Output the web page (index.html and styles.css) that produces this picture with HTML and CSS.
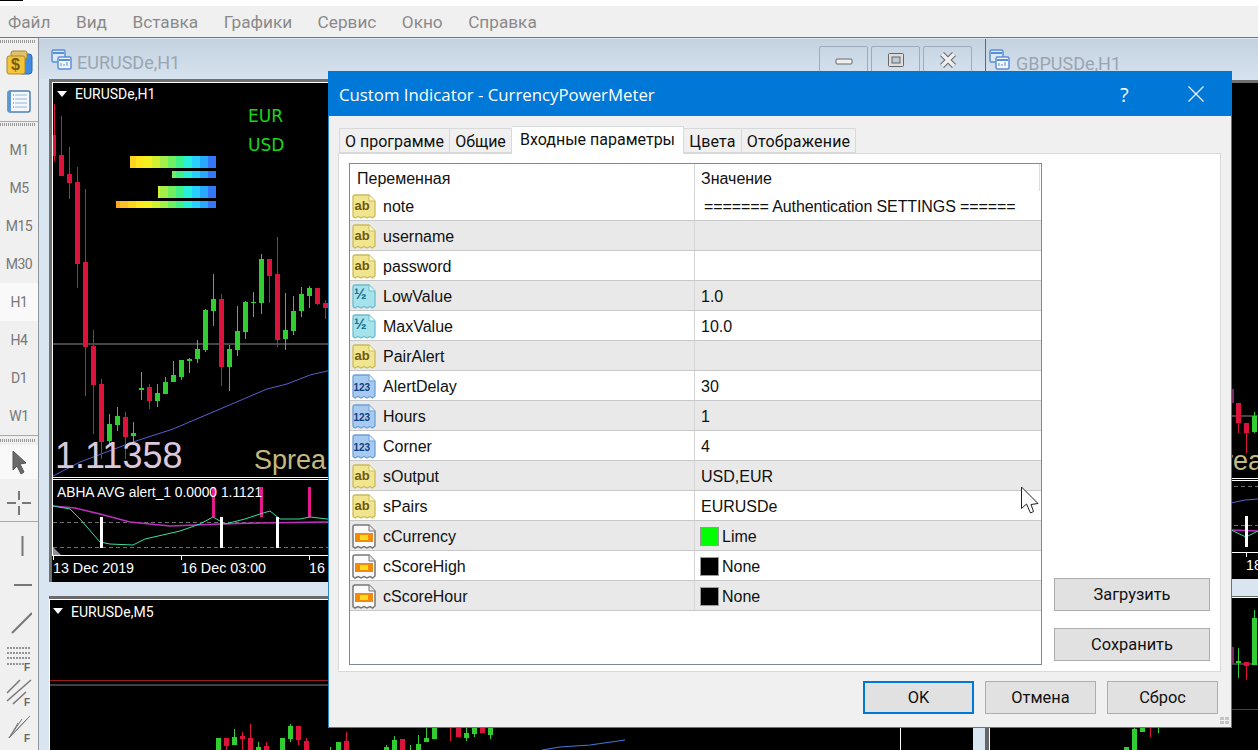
FILE: index.html
```html
<!DOCTYPE html>
<html lang="ru">
<head>
<meta charset="utf-8">
<title>Custom Indicator - CurrencyPowerMeter</title>
<link rel="stylesheet" href="styles.css">
</head>
<body>
<svg class="defs" width="0" height="0" aria-hidden="true">
  <defs>
    <linearGradient id="meter" gradientUnits="userSpaceOnUse" x1="112" x2="216" y1="0" y2="0">
      <stop offset="0" stop-color="#ffa628"/><stop offset=".077" stop-color="#ffa628"/>
      <stop offset=".077" stop-color="#ffc028"/><stop offset=".154" stop-color="#ffc028"/>
      <stop offset=".154" stop-color="#ffd41e"/><stop offset=".231" stop-color="#ffd41e"/>
      <stop offset=".231" stop-color="#ffe61e"/><stop offset=".308" stop-color="#ffe61e"/>
      <stop offset=".308" stop-color="#f4f020"/><stop offset=".385" stop-color="#f4f020"/>
      <stop offset=".385" stop-color="#d0f030"/><stop offset=".462" stop-color="#d0f030"/>
      <stop offset=".462" stop-color="#a4ee48"/><stop offset=".538" stop-color="#a4ee48"/>
      <stop offset=".538" stop-color="#70f060"/><stop offset=".615" stop-color="#70f060"/>
      <stop offset=".615" stop-color="#40f088"/><stop offset=".692" stop-color="#40f088"/>
      <stop offset=".692" stop-color="#28f0d8"/><stop offset=".769" stop-color="#28f0d8"/>
      <stop offset=".769" stop-color="#28d0ff"/><stop offset=".846" stop-color="#28d0ff"/>
      <stop offset=".846" stop-color="#28a8ff"/><stop offset=".923" stop-color="#28a8ff"/>
      <stop offset=".923" stop-color="#3478f8"/><stop offset="1" stop-color="#3478f8"/>
    </linearGradient>
    <symbol id="doc-ab" viewBox="0 0 24 26">
      <path d="M3 1H17L23 7V22l-2.500 2-2.500-1.500-3 1.500-3-1.500-3 1.500-3-1.500-3 1.500-2-1.500V3q0-2 2-2Z" fill="#f1e68f" stroke="#c9bb5c" stroke-width="1.300"/>
      <path d="M17 1V7H23" fill="#fff8c8" stroke="#c9bb5c"/>
      <text x="2.500" y="16" class="ic-t ic-ab">ab</text>
    </symbol>
    <symbol id="doc-half" viewBox="0 0 24 26">
      <path d="M3 1H17L23 7V22l-2.500 2-2.500-1.500-3 1.500-3-1.500-3 1.500-3-1.500-3 1.500-2-1.500V3q0-2 2-2Z" fill="#a6e2ec" stroke="#6cbccb" stroke-width="1.300"/>
      <path d="M17 1V7H23" fill="#dff6fa" stroke="#6cbccb"/>
      <text x="2" y="15" class="ic-t ic-half">½</text>
    </symbol>
    <symbol id="doc-int" viewBox="0 0 24 26">
      <path d="M3 1H17L23 7V22l-2.500 2-2.500-1.500-3 1.500-3-1.500-3 1.500-3-1.500-3 1.500-2-1.500V3q0-2 2-2Z" fill="#a7cbf0" stroke="#6f9fd2" stroke-width="1.300"/>
      <path d="M17 1V7H23" fill="#e0eefb" stroke="#6f9fd2"/>
      <text x="1.500" y="17" class="ic-t ic-int">123</text>
    </symbol>
    <symbol id="doc-color" viewBox="0 0 24 26">
      <path d="M3 1H17L23 7V22l-2.500 2-2.500-1.500-3 1.500-3-1.500-3 1.500-3-1.500-3 1.500-2-1.500V3q0-2 2-2Z" fill="#fafafa" stroke="#777" stroke-width="1.500"/>
      <path d="M17 1V7H23" fill="#e8e8e8" stroke="#777"/>
      <rect x="3" y="9" width="18" height="9" fill="#f08a08"/>
      <rect x="8" y="11" width="8" height="5" fill="#ffd820"/>
    </symbol>
    <symbol id="win-icon" viewBox="0 0 21 21">
      <rect x="1" y="1" width="13" height="12" rx="1.500" fill="#dbe8f6" stroke="#5b8fd6" stroke-width="1.500"/>
      <path d="M2 4H13" stroke="#5b8fd6" stroke-width="2"/>
      <rect x="7" y="8" width="13" height="12" rx="1.500" fill="#f2f7fc" stroke="#5b8fd6" stroke-width="1.500"/>
      <path d="M8 11H19" stroke="#5b8fd6" stroke-width="2"/>
      <path d="M10 17V14M13 17V15M16 17V13" stroke="#5b8fd6"/>
    </symbol>
  </defs>
</svg>

<div class="app">
  <div class="topstrip"><span class="topmark"></span></div>
  <nav class="menubar">
    <span>Файл</span><span>Вид</span><span>Вставка</span><span>Графики</span><span>Сервис</span><span>Окно</span><span>Справка</span>
  </nav>
  <div class="workspace">
    <aside class="toolbar">
      <div class="grip first"></div>
      <div class="tool big">
        <svg width="28" height="28" viewBox="0 0 28 28">
          <rect x="14" y="5" width="13" height="20" rx="3" fill="#3f8be0" stroke="#2c68b0"/>
          <rect x="6" y="2" width="16" height="8" rx="2" fill="#e3c070" stroke="#a98a2f"/>
          <rect x="2" y="7" width="18" height="18" rx="2" fill="#f2c53a" stroke="#a98a2f"/>
          <text x="6" y="21" class="dollar">$</text>
        </svg>
      </div>
      <div class="tool big">
        <svg width="26" height="26" viewBox="0 0 26 26">
          <rect x="2" y="2" width="22" height="21" rx="2" fill="#f4f8fc" stroke="#4a7fb5" stroke-width="1.500"/>
          <rect x="2" y="2" width="3" height="21" fill="#5d97d0"/>
          <path d="M9 6H21M9 10H21M9 14H21M9 18H21" stroke="#9ab4cc"/>
          <path d="M7 6H8M7 10H8M7 14H8M7 18H8" stroke="#c8304a"/>
        </svg>
      </div>
      <div class="toolsep"><div class="grip"></div></div>
      <div class="tf">M1</div>
      <div class="tf">M5</div>
      <div class="tf">M15</div>
      <div class="tf">M30</div>
      <div class="tf active">H1</div>
      <div class="tf">H4</div>
      <div class="tf">D1</div>
      <div class="tf">W1</div>
      <div class="toolsep wide"><div class="grip"></div></div>
      <div class="tool active small">
        <svg width="20" height="26" viewBox="0 0 20 26"><path d="M4 2V21L8 17L12 25L15 23L11 15L17 14Z" fill="#6a6a6a" stroke="#555"/></svg>
      </div>
      <div class="tool cross">
        <svg width="26" height="26" viewBox="0 0 26 26"><path d="M13 1V10M13 16V25M1 13H10M16 13H25" stroke="#777" stroke-width="2"/></svg>
      </div>
      <div class="tool line">
        <svg width="26" height="26" viewBox="0 0 26 26"><path d="M16.500 3V23" stroke="#777" stroke-width="2"/></svg>
      </div>
      <div class="tool">
        <svg width="26" height="26" viewBox="0 0 26 26"><path d="M8 14H26" stroke="#777" stroke-width="2"/></svg>
      </div>
      <div class="tool">
        <svg width="26" height="26" viewBox="0 0 26 26"><path d="M6 24L26 4" stroke="#777" stroke-width="2"/></svg>
      </div>
      <div class="tool fib">
        <svg width="30" height="30" viewBox="0 0 30 30"><path d="M3 4H27M3 9H27M3 14H27M3 20H20" stroke="#777" stroke-width="1.500" stroke-dasharray="2 1"/><text x="20" y="27" class="fmark">F</text></svg>
      </div>
      <div class="tool short">
        <svg width="30" height="30" viewBox="0 0 30 30"><path d="M3 16L16 3M3 24L27 3M9 27L22 15" stroke="#777" stroke-width="1.500"/><text x="20" y="29" class="fmark">F</text></svg>
      </div>
      <div class="tool short">
        <svg width="30" height="30" viewBox="0 0 30 30"><path d="M5 25L26 3M5 25L23 6M5 25L18 6M5 25L14 10" stroke="#777"/><text x="20" y="29" class="fmark">F</text></svg>
      </div>
    </aside>

    <main class="mdi">
      <section class="win win-a">
        <header class="wintitle">
          <svg class="winicon" width="21" height="21"><use href="#win-icon"/></svg>
          <span class="wintext">EURUSDe,H1</span>
          <div class="winbtns">
            <button class="winbtn" type="button"><svg width="18" height="18" viewBox="0 0 18 18"><rect x="1" y="7" width="16" height="5" rx="1" fill="#eee" stroke="#666"/></svg></button>
            <button class="winbtn" type="button"><svg width="18" height="18" viewBox="0 0 18 18"><rect x="1.500" y="1.500" width="15" height="13" rx="1" fill="#ddd" stroke="#666"/><rect x="5" y="5" width="8" height="6" fill="#bcc9d6" stroke="#666"/></svg></button>
            <button class="winbtn" type="button"><svg width="18" height="18" viewBox="0 0 18 18"><path d="M3 2L15 14M15 2L3 14" stroke="#666" stroke-width="5.500"/><path d="M3 2L15 14M15 2L3 14" stroke="#f0f0f0" stroke-width="3.500"/></svg></button>
          </div>
        </header>
        <div class="chart">
          <svg class="plot" width="933" height="500" viewBox="52 83 933 500">
            <path class="axis" d="M52.500 83V556M52 83.500H985"/>
            <path class="hline" d="M53 345H985"/>
            <path class="ma" d="M53 477L80 463L133 443L173 430L213 413L267 390L287 385L310 376L327 372L600 300"/>
            <path class="w-red" d="M54.500 105V162M61.500 117V177M69.500 148V200M77.500 168V289M85.500 190V397M93.500 331V435M101.500 380V460M125.500 413V460M149.500 385V410M221.500 295V387M269.500 260V304M277.500 238V348M317.500 289V306M325.500 301V320"/>
            <path class="b-red" d="M53 136h3v21h-3zM59 156h5v21h-5zM67 175h5v9h-5zM75 183h5v82h-5zM83 263h5v85h-5zM91 347h5v39h-5zM99 385h5v58h-5zM123 418h5v20h-5zM147 388h5v14h-5zM219 300h5v68h-5zM267 260h5v17h-5zM275 275h5v66h-5zM315 289h5v16h-5zM323 304h5v5h-5z"/>
            <path class="w-green" d="M109.500 415V445M117.500 408V432M133.500 423V445M141.500 373V401M157.500 385V408M165.500 378V395M173.500 362V383M181.500 361V381M189.500 359V374M197.500 341V364M205.500 310V353M213.500 275V327M229.500 346V392M237.500 307V357M245.500 302V340M253.500 293V318M261.500 255V315M285.500 294V351M293.500 297V336M301.500 288V318M309.500 287V309"/>
            <path class="b-green" d="M107 425h5v17h-5zM115 417h5v9h-5zM131 434h5v3h-5zM139 389h5v2h-5zM155 394h5v8h-5zM163 383h5v12h-5zM171 376h5v7h-5zM179 361h5v17h-5zM187 360h5v2h-5zM195 350h5v10h-5zM203 311h5v40h-5zM211 300h5v12h-5zM227 350h5v18h-5zM235 332h5v19h-5zM243 303h5v30h-5zM251 303h5v1h-5zM259 260h5v44h-5zM283 331h5v9h-5zM291 312h5v20h-5zM299 295h5v17h-5zM307 289h5v8h-5z"/>
            <path class="tri" d="M57 92H67L62 98Z"/>
            <text x="75" y="100" class="ctitle">EURUSDe,H1</text>
            <text x="248" y="123" class="lbl">EUR</text>
            <text x="248" y="152" class="lbl">USD</text>
            <rect class="meter" x="130" y="157" width="86" height="12"/>
            <rect class="meter" x="172" y="172" width="44" height="7"/>
            <rect class="meter" x="158" y="187" width="58" height="12"/>
            <rect class="meter" x="116" y="202" width="100" height="7"/>
            <text x="55" y="469" class="price">1.11358</text>
            <text x="254" y="470" class="spread">Sprea</text>
            <path class="axis" d="M52 478.500H985M52 480.500H985M52 556.500H985M53.500 556V561M181.500 556V561M309.500 556V561M437.500 556V561"/>
            <path class="dash" d="M53 523.500H985M53 548.500H985"/>
            <path class="pink" d="M213.500 488V518M261.500 488V518M309.500 488V518"/>
            <path class="mag" d="M53 507L75 509L100 515L130 523L170 527L220 525L260 524L327 523L600 523"/>
            <path class="teal" d="M53 507L70 510L80 520L100 543L110 545L133 546L145 540L180 532L200 525L213 518L225 525L245 520L260 515L270 512L280 520L300 520L310 518L327 520L600 520"/>
            <path class="wbar" d="M101.500 518V549M221.500 518V549M277.500 518V549"/>
            <path class="corner" d="M53 548L61 556H53Z"/>
            <text x="57" y="498" class="sub">ABHA AVG alert_1 0.0000 1.1121</text>
            <text x="53" y="574" class="time">13 Dec 2019</text>
            <text x="181" y="574" class="time">16 Dec 03:00</text>
            <text x="309" y="574" class="time">16</text>
          </svg>
        </div>
      </section>

      <section class="win win-b">
        <header class="wintitle">
          <svg class="winicon" width="21" height="21"><use href="#win-icon"/></svg>
          <span class="wintext">GBPUSDe,H1</span>
        </header>
        <div class="chart">
          <svg class="plot" width="269" height="496" viewBox="989 87 269 496">
            <path class="hline" d="M989 420H1258"/>
            <path class="w-red" d="M1238.500 407V437M1246.500 427V457"/>
            <path class="b-red" d="M1236 407h5v20h-5zM1244 427h5v10h-5z"/>
            <path class="w-purple" d="M1232 400V407"/>
            <path class="b-purple" d="M1231 393h3v14h-3z"/>
            <path class="w-green" d="M1254.500 416V437"/>
            <path class="b-green" d="M1252 420h5v16h-5z"/>
            <text x="1224" y="474" class="spread">rea</text>
            <path class="axis" d="M989 482.500H1258M989 484.500H1258M989 556.500H1258M1246.500 556V561"/>
            <path class="dash" d="M989 490.500H1258M989 529.500H1258"/>
            <path class="ma" d="M1231 507L1245 504L1258 503"/>
            <path class="mag" d="M1231 534L1258 535"/>
            <path class="teal" d="M1231 534L1246 541L1258 535"/>
            <path class="wbar" d="M1246.500 520V551"/>
            <text x="1246" y="574" class="time">18</text>
          </svg>
        </div>
      </section>

      <section class="win win-c">
        <div class="chart">
          <svg class="plot" width="924" height="151" viewBox="49 599 924 151">
            <path class="axis" d="M49.500 599V750M49 599.500H973"/>
            <path class="tri" d="M53 608H63L58 614Z"/>
            <text x="71" y="617" class="ctitle">EURUSDe,M5</text>
            <path class="rline" d="M50 680.500H973"/>
            <path class="gline" d="M50 685H973"/>
            <path class="w-red" d="M226.500 738V750M242.500 732V750M250.500 724V750M266.500 742V750M298.500 726V745M306.500 738V750M346.500 732V750M402.500 739V750M450.500 728V741M458.500 728V737M482.500 728V733"/>
            <path class="b-red" d="M224 738h5v8h-5zM240 736h5v3h-5zM248 738h5v12h-5zM264 746h5v4h-5zM296 726h5v14h-5zM304 741h5v9h-5zM344 741h5v9h-5zM400 739h5v11h-5zM456 728h5v9h-5zM480 728h5v5h-5z"/>
            <path class="w-green" d="M234.500 729V745M258.500 742V750M290.500 724V742M330.500 747V750M386.500 745V750M394.500 736V750M410.500 745V750M418.500 735V750M426.500 728V742M466.500 728V741M474.500 728V737M490.500 728V739"/>
            <path class="b-green" d="M216 738h5v12h-5zM232 737h5v8h-5zM256 747h5v3h-5zM280 738h5v12h-5zM288 726h5v13h-5zM336 742h5v8h-5zM384 747h5v3h-5zM392 740h5v10h-5zM416 744h5v6h-5zM424 738h5v4h-5zM432 728h5v11h-5zM464 733h5v5h-5zM472 728h5v6h-5zM488 728h5v7h-5z"/>
            <path class="bline" d="M542 750L560 747L590 745L625 740"/>
            <path class="vwhite" d="M900.500 600V750"/>
          </svg>
        </div>
      </section>

      <section class="win win-d">
        <div class="chart">
          <svg class="plot" width="269" height="153" viewBox="989 597 269 153">
            <path class="axis" d="M989.500 597V750M989 597.500H1258"/>
            <path class="rline" d="M989 709.500H1258"/>
            <path class="gline" d="M989 664H1258"/>
            <path class="b-purple" d="M1231 647h3v17h-3z"/>
            <path class="w-green" d="M1238.500 648V678M1254.500 610V665"/>
            <path class="b-green" d="M1236 661h5v2h-5zM1252 618h5v47h-5z"/>
            <path class="w-red" d="M1246.500 662V680"/>
            <path class="b-red" d="M1244 662h5v4h-5z"/>
            <path class="w-green" d="M1158.500 728V733M1134.500 728V750"/>
            <path class="w-red" d="M1150.500 728V737"/>
            <path class="b-green" d="M1132 729h5v21h-5zM1124 747h5v3h-5zM1140 728h5v4h-5z"/>
          </svg>
        </div>
      </section>
    </main>
  </div>

  <div class="dialog">
    <header class="dlgtitle">
      <span class="dlgtext">Custom Indicator - CurrencyPowerMeter</span>
      <span class="dlghelp">?</span>
      <svg class="dlgclose" width="16" height="16" viewBox="0 0 16 16"><path d="M.5.5L15.500 15.500M15.500.5L.5 15.500" stroke="#fff" stroke-width="1.100"/></svg>
    </header>
    <div class="tabs">
      <div class="tab t1">О программе</div>
      <div class="tab t2">Общие</div>
      <div class="tab t3 on">Входные параметры</div>
      <div class="tab t4">Цвета</div>
      <div class="tab t5">Отображение</div>
    </div>
    <div class="panel">
      <div class="table">
        <div class="thead"><div class="c1 hd">Переменная</div><div class="c2 hd">Значение</div></div>
        <div class="row"><div class="c1"><svg class="ic"><use href="#doc-ab"/></svg>note</div><div class="c2 v0">======= Authentication SETTINGS ======</div></div>
        <div class="row alt"><div class="c1"><svg class="ic"><use href="#doc-ab"/></svg>username</div><div class="c2"></div></div>
        <div class="row"><div class="c1"><svg class="ic"><use href="#doc-ab"/></svg>password</div><div class="c2"></div></div>
        <div class="row alt"><div class="c1"><svg class="ic"><use href="#doc-half"/></svg>LowValue</div><div class="c2">1.0</div></div>
        <div class="row"><div class="c1"><svg class="ic"><use href="#doc-half"/></svg>MaxValue</div><div class="c2">10.0</div></div>
        <div class="row alt"><div class="c1"><svg class="ic"><use href="#doc-ab"/></svg>PairAlert</div><div class="c2"></div></div>
        <div class="row"><div class="c1"><svg class="ic"><use href="#doc-int"/></svg>AlertDelay</div><div class="c2">30</div></div>
        <div class="row alt"><div class="c1"><svg class="ic"><use href="#doc-int"/></svg>Hours</div><div class="c2">1</div></div>
        <div class="row"><div class="c1"><svg class="ic"><use href="#doc-int"/></svg>Corner</div><div class="c2">4</div></div>
        <div class="row alt"><div class="c1"><svg class="ic"><use href="#doc-ab"/></svg>sOutput</div><div class="c2">USD,EUR</div></div>
        <div class="row"><div class="c1"><svg class="ic"><use href="#doc-ab"/></svg>sPairs</div><div class="c2">EURUSDe</div></div>
        <div class="row alt"><div class="c1"><svg class="ic"><use href="#doc-color"/></svg>cCurrency</div><div class="c2"><span class="sw lime"></span>Lime</div></div>
        <div class="row"><div class="c1"><svg class="ic"><use href="#doc-color"/></svg>cScoreHigh</div><div class="c2"><span class="sw"></span>None</div></div>
        <div class="row alt"><div class="c1"><svg class="ic"><use href="#doc-color"/></svg>cScoreHour</div><div class="c2"><span class="sw"></span>None</div></div>
      </div>
      <div class="side">
        <button class="btn" type="button">Загрузить</button>
        <button class="btn" type="button">Сохранить</button>
      </div>
    </div>
    <footer class="dlgfoot">
      <button class="btn ok" type="button">OK</button>
      <button class="btn" type="button">Отмена</button>
      <button class="btn" type="button">Сброс</button>
      <svg class="sizegrip" width="9" height="8" viewBox="0 0 9 8"><path d="M0 0h4v3H0zM5 0h4v3H5zM0 4h4v3H0zM5 4h4v3H5z" fill="#c4c4c4"/></svg>
    </footer>
  </div>

  <svg class="cursor" width="20" height="29" viewBox="0 0 20 29"><path d="M1.500 1V22.500L6.500 18L10.500 27L13.500 25.500L11 18.500L18 17.500Z" fill="#fff" stroke="#222"/></svg>
</div>
</body>
</html>
```

FILE: styles.css
```css
* { box-sizing: border-box; }
html, body { margin: 0; padding: 0; }
body { width: 1258px; height: 750px; overflow: hidden; background: #fff; font-family: "Liberation Sans", Arial, sans-serif; }
.defs { position: absolute; }
.ic-t { font-family: "Liberation Sans", sans-serif; font-weight: 700; }
.ic-ab { font-size: 13px; fill: #6b5a10; }
.ic-half { font-size: 15px; fill: #14708c; }
.ic-int { font-size: 10px; fill: #123c7c; }
.dollar { font: 700 16px "Liberation Sans", sans-serif; fill: #7a5a10; }
.fmark { font: 700 10px "Liberation Sans", sans-serif; fill: #666; }

.app { position: relative; width: 1258px; height: 750px; overflow: hidden; display: flex; flex-direction: column; }
.topstrip { height: 6px; background: #fff; }
.topmark { display: block; width: 23px; height: 1px; background: #000; }
.menubar { height: 32px; background: #f0f0f0; border-bottom: 1px solid #777; display: flex; align-items: center; gap: 25.500px; padding: 1px 0 0 8px; font: 17.200px Roboto, sans-serif; color: #8a8a8a; }

.workspace { flex: 1; min-height: 0; display: flex; }
.toolbar { width: 39px; flex: none; background: #f0f0f0; border-right: 1px solid #8d949c; display: flex; flex-direction: column; overflow: hidden; }
.grip { height: 3px; margin: 0 3px 0 0; background: repeating-linear-gradient(to right, #999 0 1px, transparent 1px 2px); }
.grip.first { margin-top: 2px; flex: none; }
.tool { height: 38px; flex: none; display: flex; align-items: center; justify-content: center; }
.tool.big { height: 39px; padding-top: 1px; }
.tool.active { background: #f9f9f9; }
.tool.small { height: 34px; }
.tool.cross { height: 38px; margin-top: 5px; border-bottom: 1px solid #aaa; margin-bottom: 5px; }
.tool.fib { height: 33px; padding-top: 3px; overflow: visible; }
.tool.short { height: 36px; }
.toolsep { flex: none; height: 10px; border-top: 1px solid #aaa; padding-top: 1px; }
.toolsep.wide { height: 10px; padding-top: 3px; }
.tf { flex: none; height: 38px; display: flex; align-items: center; justify-content: center; font: 14px Roboto, sans-serif; letter-spacing: -.5px; color: #777; }
.tf.active { background: #f9f9f9; }

.mdi { flex: 1; min-width: 0; position: relative; background: #d9e5f1; }
.win { position: absolute; }
.win-a { left: 0; top: 1px; width: 946px; height: 556px; display: flex; flex-direction: column; background: #d9e5f1; }
.win-b { left: 946px; top: 1px; width: 273px; height: 556px; display: flex; flex-direction: column; background: #d9e5f1; border-left: 1px solid #666; }
.win-c { left: 10px; top: 558px; width: 924px; height: 154px; border-top: 3px solid #6a6a6a; }
.win-d { left: 946px; top: 558px; width: 273px; height: 154px; border-top: 1px solid #6a6a6a; border-left: 4px solid #666; }
.wintitle { position: relative; height: 40px; flex: none; background: linear-gradient(#c4d2e0, #d6e2ee); display: flex; align-items: center; padding: 0 0 0 12px; gap: 5px; border-bottom: 3px solid #6f6f6f; }
.win-b .wintitle { height: 44px; padding-left: 3px; gap: 6px; }
.win-a .wintitle { border-bottom: 0; }
.win-a .chart { border-top: 3px solid #6f6f6f; border-left: 3px solid #6f6f6f; margin-left: 10px; }
.win-b .chart { padding-left: 3px; border-top: 0; }
.winicon { flex: none; }
.wintext { font: 18px Roboto, sans-serif; color: #9aa5b1; padding-top: 7px; }
.winbtns { position: absolute; left: 780px; top: 7px; display: flex; gap: 3px; }
.winbtn { width: 49px; height: 30px; padding: 0; border: 1px solid #9dabba; border-radius: 2px; background: transparent; display: flex; align-items: center; justify-content: center; }
.chart { background: #000; overflow: hidden; line-height: 0; }
.plot { display: block; }

.axis { stroke: #fff; fill: none; }
.hline { stroke: #8a8a92; fill: none; }
.gline { stroke: #7f8088; fill: none; }
.rline { stroke: #a01c1c; fill: none; }
.ma { stroke: #5c5fd0; fill: none; }
.bline { stroke: #3f78d8; fill: none; stroke-width: 1.200; }
.w-red { stroke: #dc143c; fill: none; }
.b-red { fill: #dc143c; }
.w-green { stroke: #32cd32; fill: none; }
.b-green { fill: #32cd32; }
.w-purple { stroke: #8a2a6a; fill: none; }
.b-purple { fill: #7a2a62; }
.tri { fill: #fff; }
.ctitle { font: 14px Roboto, sans-serif; fill: #fff; }
.lbl { font: 17px "DejaVu Sans", sans-serif; fill: #18d818; }
.meter { fill: url(#meter); }
.price { font: 36px "Liberation Sans", sans-serif; fill: #dcc8dc; }
.spread { font: 27px "Liberation Sans", sans-serif; fill: #c4b97e; }
.dash { stroke: #6e6e6e; stroke-dasharray: 4 3; fill: none; }
.pink { stroke: #e6198c; stroke-width: 3; fill: none; }
.wbar { stroke: #fff; stroke-width: 3; fill: none; }
.mag { stroke: #c030c0; stroke-width: 1.500; fill: none; }
.teal { stroke: #38e0a0; fill: none; }
.corner { fill: #8a8f98; }
.sub { font: 13.800px "Liberation Sans", sans-serif; fill: #fff; }
.time { font: 14.300px "Liberation Sans", sans-serif; fill: #fff; }
.vwhite { stroke: #fff; fill: none; }

.dialog { position: absolute; left: 328px; top: 71px; width: 904px; height: 657px; background: #f0f0f0; border: 1px solid #2b82d0; border-top: 0; display: flex; flex-direction: column; }
.dlgtitle { position: relative; height: 45px; flex: none; margin: 0 -1px; background: #0078d7; color: #fff; display: flex; align-items: center; padding: 1px 0 0 11px; }
.dlgtext { font: 16.800px "Open Sans", sans-serif; }
.dlghelp { position: absolute; left: 792px; top: 10px; font: 20px "Open Sans", sans-serif; }
.dlgclose { position: absolute; left: 860px; top: 15px; }
.tabs { height: 27px; margin: 10px 0 0 10px; display: flex; align-items: flex-end; position: relative; z-index: 1; }
.tab { height: 25px; display: flex; align-items: center; justify-content: center; background: #f0f0f0; border: 1px solid #d9d9d9; border-left: 0; font: 16px Roboto, sans-serif; color: #111; flex: none; padding-top: 1px; }
.t1 { width: 111px; border-left: 1px solid #d9d9d9; }
.t2 { width: 62px; }
.t3 { width: 172px; }
.t4 { width: 58px; }
.t5 { width: 114px; }
.t5, .t4 { letter-spacing: .2px; }
.tab.on { height: 28px; background: #fff; border-bottom: 0; margin-bottom: -1px; padding-top: 0; padding-bottom: 3px; }
.panel { margin: 0 10px 0 9px; height: 519px; flex: none; background: #fff; border: 1px solid #d9d9d9; padding: 9px 10px 6px; display: flex; }
.table { width: 693px; flex: none; border: 1px solid #828790; background: #fff; font-size: 16px; color: #111; }
.thead { height: 27px; display: grid; grid-template-columns: 344px 1fr; }
.row { height: 30px; display: grid; grid-template-columns: 344px 1fr; border-bottom: 1px solid #c8c8c8; }
.row.alt { background: #e9e9e9; }
.c1 { display: flex; align-items: center; gap: 7px; padding: 2px 0 0 2px; line-height: 20px; }
.c2 { display: flex; align-items: center; padding: 2px 0 0 6px; border-left: 1px solid #d6d6d6; line-height: 20px; }
.hd { padding: 2px 0 0 7px; }
.hd.c2 { padding-left: 6px; border-right: 1px solid #ddd; margin-right: 1px; }
.v0 { padding-left: 9px; letter-spacing: -.1px; }
.ic { width: 24px; height: 26px; flex: none; }
.sw { width: 19px; height: 19px; margin: 0 3px 0 -1px; background: #000; border: 1px solid #999; flex: none; }
.sw.lime { background: #00ff00; }
.side { width: 156px; margin-left: 12px; display: flex; flex-direction: column; justify-content: flex-end; gap: 17px; padding-bottom: 4px; }
.btn { height: 33px; width: 111px; flex: none; padding: 0; background: #e1e1e1; border: 1px solid #adadad; font: 16.400px Roboto, sans-serif; color: #111; }
.side .btn { width: 156px; }
.btn.ok { border: 2px solid #0078d7; }
.dlgfoot { position: relative; flex: 1; display: flex; justify-content: flex-end; gap: 11px; padding: 9px 13px 0 0; }
.sizegrip { position: absolute; right: 2px; bottom: 2px; }
.cursor { position: absolute; left: 1020px; top: 486px; }
```
